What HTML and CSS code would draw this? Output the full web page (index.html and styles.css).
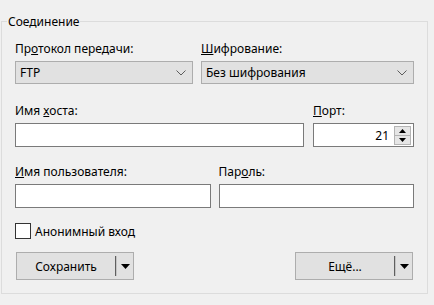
FILE: index.html
```html
<!DOCTYPE html>
<html lang="ru">
<head>
<meta charset="utf-8">
<title>Соединение</title>
<link rel="stylesheet" href="styles.css">
</head>
<body>
<fieldset class="group">
  <legend class="group-title">Соединение</legend>
  <div class="group-body">
    <div class="row row-1">
      <div class="field">
        <div class="label">Пр<u>о</u>токол передачи:</div>
        <div class="combo">
          <span class="combo-text">FTP</span>
          <svg class="chev" width="10" height="6" viewBox="0 0 10 6"><path d="M0.5 0.5 L5 5 L9.5 0.5" fill="none" stroke="#5c5c5c" stroke-width="1"/></svg>
        </div>
      </div>
      <div class="field">
        <div class="label"><u>Ш</u>ифрование:</div>
        <div class="combo">
          <span class="combo-text">Без шифрования</span>
          <svg class="chev" width="10" height="6" viewBox="0 0 10 6"><path d="M0.5 0.5 L5 5 L9.5 0.5" fill="none" stroke="#5c5c5c" stroke-width="1"/></svg>
        </div>
      </div>
    </div>
    <div class="row row-2">
      <div class="field">
        <div class="label">Имя <u>х</u>оста:</div>
        <div class="edit"></div>
      </div>
      <div class="field">
        <div class="label"><u>П</u>орт:</div>
        <div class="edit port">
          <span class="port-value">21</span>
          <div class="spin">
            <div class="spin-btn up"><svg width="7" height="4" viewBox="0 0 7 4"><polygon points="0,4 7,4 3.5,0" fill="#000"/></svg></div>
            <div class="spin-btn down"><svg width="7" height="4" viewBox="0 0 7 4"><polygon points="0,0 7,0 3.5,4" fill="#000"/></svg></div>
          </div>
        </div>
      </div>
    </div>
    <div class="row row-3">
      <div class="field">
        <div class="label"><u>И</u>мя пользователя:</div>
        <div class="edit"></div>
      </div>
      <div class="field">
        <div class="label">Пар<u>о</u>ль:</div>
        <div class="edit"></div>
      </div>
    </div>
    <div class="check-row">
      <span class="checkbox"></span>
      <span class="check-text">Анонимный вход</span>
    </div>
    <div class="buttons">
      <div class="split-btn">
        <span class="split-main">Сохранить</span>
        <span class="split-sep"></span>
        <span class="split-arrow"><svg width="9" height="5" viewBox="0 0 9 5"><polygon points="0,0 9,0 4.5,5" fill="#000"/></svg></span>
      </div>
      <div class="split-btn">
        <span class="split-main">Ещё...</span>
        <span class="split-sep"></span>
        <span class="split-arrow"><svg width="9" height="5" viewBox="0 0 9 5"><polygon points="0,0 9,0 4.5,5" fill="#000"/></svg></span>
      </div>
    </div>
  </div>
</fieldset>
</body>
</html>
```
FILE: styles.css
```css
html, body {
  margin: 0;
  padding: 0;
  background: #f0f0f0;
}
body {
  font-family: "Noto Sans", "Liberation Sans", Arial, sans-serif;
  font-size: 12px;
  line-height: 15px;
  color: #000;
  width: 434px;
  height: 305px;
  overflow: hidden;
}
u {
  text-decoration: underline;
  text-underline-offset: 1px;
}
.group {
  box-sizing: border-box;
  width: 427px;
  margin: 14px 0 0 1px;
  padding: 0;
  border: 1px solid #dcdcdc;
  min-width: 0;
}
.group-title {
  margin-left: 5px;
  padding: 0 1px;
  line-height: 15px;
}
.group-body {
  padding: 12px 13px 13px 13px;
  display: flex;
  flex-direction: column;
}
.row {
  display: grid;
}
.row-1 {
  grid-template-columns: 178px 1fr;
  column-gap: 8px;
}
.row-2 {
  grid-template-columns: 1fr 101px;
  column-gap: 9px;
  margin-top: 19px;
}
.row-3 {
  grid-template-columns: 1fr 1fr;
  column-gap: 8px;
  margin-top: 17px;
}
.label {
  height: 15px;
  margin-bottom: 5px;
  white-space: nowrap;
}
.combo {
  box-sizing: border-box;
  height: 23px;
  border: 1px solid #adadad;
  background: #e1e1e1;
  display: flex;
  align-items: center;
  justify-content: space-between;
  padding: 0 6px 0 4px;
}
.combo-text {
  white-space: nowrap;
}
.chev {
  display: block;
}
.edit {
  box-sizing: border-box;
  height: 24px;
  border: 1px solid #7a7a7a;
  background: #fff;
}
.port {
  display: flex;
  align-items: center;
  justify-content: flex-end;
  padding: 0 2px;
}
.port-value {
  margin-right: 5px;
}
.spin {
  display: flex;
  flex-direction: column;
  width: 17px;
}
.spin-btn {
  box-sizing: border-box;
  height: 10px;
  border: 1px solid #b4b4b4;
  background: #e6e6e6;
  display: flex;
  align-items: center;
  justify-content: center;
}
.spin-btn.down {
  height: 9px;
  border-top: none;
}
.spin-btn svg {
  display: block;
}
.check-row {
  display: flex;
  align-items: center;
  margin-top: 15px;
  height: 16px;
}
.checkbox {
  box-sizing: border-box;
  width: 16px;
  height: 16px;
  border: 1px solid #333;
  background: #fff;
}
.check-text {
  margin-left: 4px;
}
.buttons {
  display: flex;
  justify-content: space-between;
  margin-top: 13px;
  padding: 0 1px;
}
.split-btn {
  box-sizing: border-box;
  width: 118px;
  height: 28px;
  border: 1px solid #adadad;
  background: #e1e1e1;
  display: flex;
  align-items: stretch;
}
.split-main {
  flex: 1;
  display: flex;
  align-items: center;
  justify-content: center;
}
.split-sep {
  width: 1px;
  margin: 3px 0;
  background: #5f5f5f;
  border-right: 1px solid #c4c4c4;
}
.split-arrow {
  width: 16px;
  display: flex;
  align-items: center;
  justify-content: center;
}
.split-arrow svg {
  display: block;
}
```
